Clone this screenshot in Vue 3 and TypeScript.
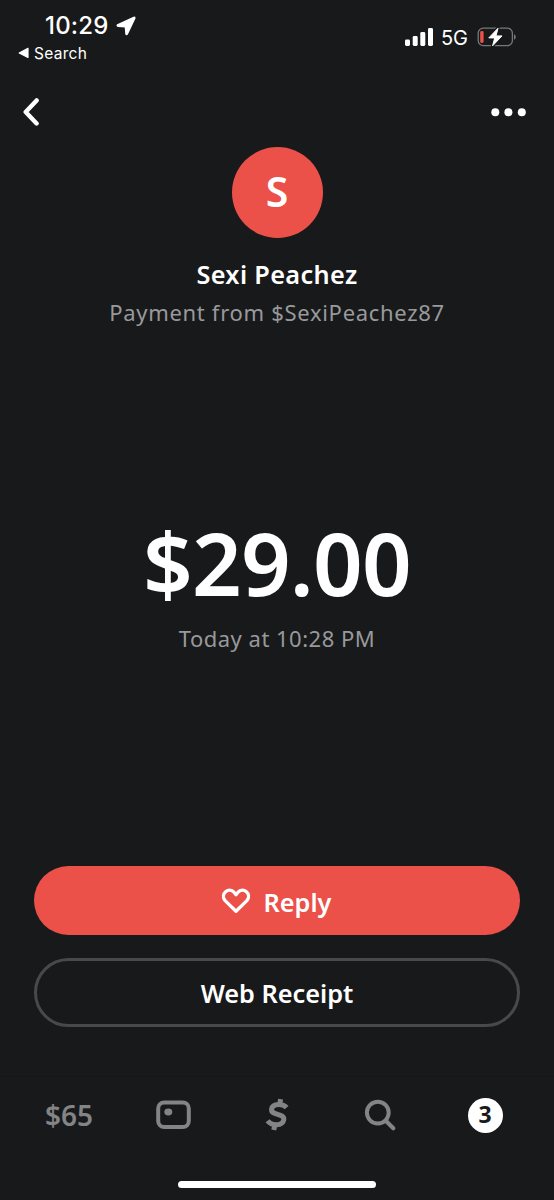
<script setup lang="ts">
interface Payment {
  name: string
  cashtag: string
  amount: string
  time: string
}

const payment: Payment = {
  name: 'Sexi Peachez',
  cashtag: '$SexiPeachez87',
  amount: '$29.00',
  time: 'Today at 10:28 PM',
}
const balance = '$65'
const unread = 3
</script>

<template>
  <main class="screen">
    <header class="status">
      <div class="status-left">
        <div class="clock">
          <span class="clock-text">10:29</span>
          <svg class="location" width="20" height="20" viewBox="0 0 20 20">
            <path d="M17.8 1.4 1.5 9Q.8 9.9 2 10.2L9.4 10.7 10 18Q10.4 19.1 11.3 18L18.8 2.2Q18.9 1.1 17.8 1.4Z" fill="#fff" stroke="#fff" stroke-width="1.5" stroke-linejoin="round" />
          </svg>
        </div>
        <div class="return">
          <svg width="11" height="12" viewBox="0 0 11 12"><path d="M10 1.4V10.4L1.2 6Z" fill="#fff" stroke="#fff" stroke-width="1.2" stroke-linejoin="round" /></svg>
          <span>Search</span>
        </div>
      </div>
      <div class="status-right">
        <svg width="28" height="19" viewBox="0 0 28 19" fill="#fff">
          <rect x="0" y="11.5" width="5" height="6.5" rx="1.4" />
          <rect x="7.7" y="8" width="5" height="10" rx="1.4" />
          <rect x="15.3" y="4" width="5" height="14" rx="1.4" />
          <rect x="23" y="0" width="5" height="18" rx="1.4" />
        </svg>
        <span class="network">5G</span>
        <svg width="40" height="20" viewBox="0 0 40 20">
          <rect x="1.2" y="1.2" width="34.2" height="17.4" rx="5" fill="none" stroke="#77787a" stroke-width="1.3" />
          <path d="M37 7.2Q38.8 8 38.8 10T37 12.8Z" fill="#77787a" />
          <rect x="3.2" y="4" width="3.4" height="12" rx="1.4" fill="#eb5149" />
          <path d="M21 .9 12 11H17.4L15.4 19.2 25 8.7H19Z" fill="#fff" stroke="#18191b" stroke-width="3.2" stroke-linejoin="round" />
          <path d="M21 1.2 11.8 10.9H17.7L15.6 18.8 25 8.9H19Z" fill="#fff" stroke="#fff" stroke-width="1" stroke-linejoin="round" />
        </svg>
      </div>
    </header>

    <nav class="toolbar">
      <svg width="18" height="30" viewBox="0 0 18 30"><path d="M15.6 3.4 4.7 15 15.6 26.4" fill="none" stroke="#fff" stroke-width="4.4" stroke-linecap="round" stroke-linejoin="round" /></svg>
      <svg width="36" height="10" viewBox="0 0 36 10" fill="#fff"><circle cx="5.3" cy="5.3" r="4" /><circle cx="18.4" cy="5.3" r="4" /><circle cx="31.8" cy="5.3" r="4" /></svg>
    </nav>

    <section class="profile">
      <div class="avatar"><span>{{ payment.name.charAt(0) }}</span></div>
      <h1 class="name">{{ payment.name }}</h1>
      <p class="caption from">Payment from {{ payment.cashtag }}</p>
    </section>

    <section class="summary">
      <div class="amount">{{ payment.amount }}</div>
      <p class="caption when">{{ payment.time }}</p>
    </section>

    <section class="actions">
      <button class="button primary">
        <svg width="30" height="26" viewBox="0 0 30 26"><path d="M15 23.2 4.1 12.6C-1.3 6.2 7.8-1.9 13.2 4.4L15 6.7 16.8 4.4C22.2-1.9 31.3 6.2 25.9 12.6Z" fill="none" stroke="#fff" stroke-width="3.3" stroke-linejoin="round" /></svg>
        <span class="reply">Reply</span>
      </button>
      <button class="button outline"><span class="receipt">Web Receipt</span></button>
    </section>

    <footer class="tabs">
      <div class="tab balance">{{ balance }}</div>
      <div class="tab">
        <svg width="36" height="30" viewBox="0 0 36 30"><rect x="3.2" y="2.5" width="30.6" height="24.6" rx="6" fill="none" stroke="#838485" stroke-width="4" /><ellipse cx="13.3" cy="12" rx="4" ry="3.4" fill="#838485" /></svg>
      </div>
      <div class="tab">
        <svg width="26" height="34" viewBox="0 0 26 34" fill="none" stroke="#838485">
          <path d="M22.6 9.6C19.6 6 8.8 4.6 7.6 11.1C6.4 17.9 21 14.7 19.8 21.7C18.6 28.6 7.4 28 3.6 22.8" stroke-width="5" />
          <path d="M15.8 6 16.6 1.2M9.8 32 10.7 27.5" stroke-width="5" />
        </svg>
      </div>
      <div class="tab">
        <svg class="search" width="33" height="33" viewBox="0 0 33 33" fill="none" stroke="#838485"><circle cx="13.8" cy="13.6" r="10.9" stroke-width="4" /><path d="m21.8 21.8 7.5 7.5" stroke-width="4.2" stroke-linecap="round" /></svg>
      </div>
      <div class="tab"><span class="badge">{{ unread }}</span></div>
    </footer>
    <div class="home-indicator"></div>
  </main>
</template>

<style>
body {
  margin: 0;
  background: #18191b;
}
</style>

<style scoped>
.screen {
  display: flex;
  flex-direction: column;
  width: 554px;
  height: 1200px;
  overflow: hidden;
  background: #18191b;
  color: #fff;
  font-family: "Noto Sans", "Open Sans", sans-serif;
}
svg {
  display: block;
  flex: none;
}
.status {
  display: flex;
  justify-content: space-between;
  box-sizing: border-box;
  height: 72px;
  padding: 9px 37px 0 18px;
  font-family: Inter, sans-serif;
}
.clock {
  display: flex;
  align-items: center;
  gap: 7px;
  height: 33px;
  padding-left: 27px;
  font-size: 24px;
  font-weight: 500;
}
.clock-text {
  letter-spacing: 0.2px;
}
.return {
  display: flex;
  align-items: center;
  gap: 5px;
  height: 22px;
  font-size: 15.5px;
  letter-spacing: 0.3px;
}
.status-right {
  display: flex;
  align-items: center;
  height: 56px;
}
.network {
  margin: 0 9px 0 8px;
  padding-top: 1px;
  font-size: 20px;
}
.toolbar {
  display: flex;
  align-items: center;
  justify-content: space-between;
  height: 75px;
  padding: 5px 28px 0 21px;
  box-sizing: border-box;
}
.profile,
.summary {
  display: flex;
  flex-direction: column;
  align-items: center;
}
.avatar {
  display: flex;
  align-items: center;
  justify-content: center;
  box-sizing: border-box;
  width: 91px;
  height: 91px;
  padding-bottom: 4px;
  border-radius: 50%;
  background: #eb5149;
  font-size: 41px;
  font-weight: 600;
}
.name {
  margin: 18px 0 5px;
  font-size: 25.3px;
  font-weight: 600;
  line-height: 36px;
  letter-spacing: 0.35px;
}
.caption {
  margin: 0;
  color: #98999b;
  font-size: 22px;
  line-height: 30px;
}
.from {
  letter-spacing: 0.7px;
}
.when {
  margin-top: 11px;
  letter-spacing: 0.5px;
}
.summary {
  margin-top: 185px;
}
.amount {
  font-size: 87px;
  font-weight: 600;
  line-height: 100px;
  letter-spacing: -0.8px;
}
.actions {
  display: flex;
  flex-direction: column;
  gap: 23px;
  margin: 213px 34px 0;
}
.button {
  display: flex;
  align-items: center;
  justify-content: center;
  box-sizing: border-box;
  height: 69px;
  border: 0;
  border-radius: 35px;
  padding: 0;
  color: #fff;
  font: 600 25.3px/36px "Noto Sans", "Open Sans", sans-serif;
}
.primary {
  gap: 13px;
  padding-right: 2px;
  background: #eb5149;
}
.reply {
  padding-top: 2px;
}
.outline {
  border: 3px solid #48494b;
  background: transparent;
}
.tabs {
  display: grid;
  grid-template-columns: repeat(5, 104px);
  justify-content: center;
  height: 76px;
  margin-top: 49px;
  border-top: 1px solid #151618;
}
.tab {
  display: flex;
  align-items: center;
  justify-content: center;
}
.balance {
  color: #838485;
  font-size: 28px;
  font-weight: 600;
}
.search {
  margin-right: 2px;
}
.badge {
  width: 35px;
  height: 35px;
  border-radius: 50%;
  background: #fff;
  color: #18191b;
  font-size: 23px;
  font-weight: 700;
  line-height: 33px;
  text-align: center;
}
.home-indicator {
  width: 198px;
  height: 7px;
  margin: 28px 0 0 178px;
  border-radius: 4px;
  background: #fff;
}
</style>
